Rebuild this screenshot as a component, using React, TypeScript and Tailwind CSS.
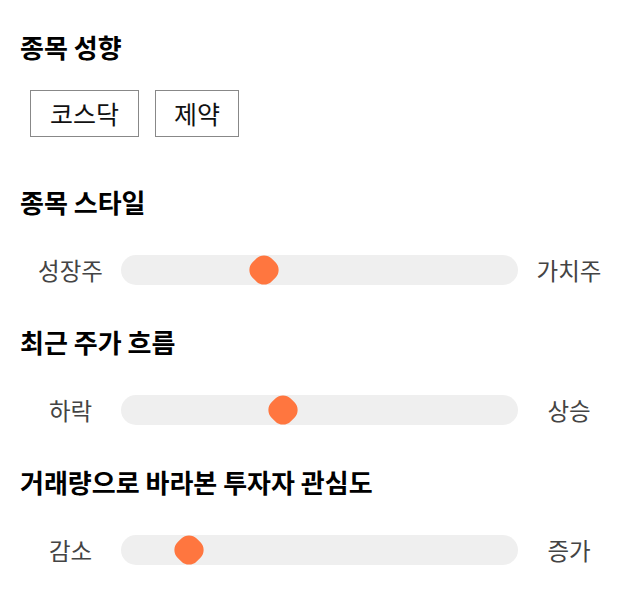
import React from 'react';

const font = { fontFamily: '"Noto Sans CJK KR", "Noto Sans", sans-serif' };

interface SliderRowProps {
  left: string;
  right: string;
  value: number; // thumb center, px from track start
}

const SliderRow: React.FC<SliderRowProps> = ({ left, right, value }) => (
  <div className="flex items-center h-[30px]">
    <span className="w-[101px] text-center text-[23.5px] leading-[30px] text-[#444]">{left}</span>
    <div className="relative w-[397px] h-[30px] rounded-full bg-[#efefef]">
      <div
        className="absolute top-1/2 w-[27px] h-[27px] -translate-x-1/2 -translate-y-1/2 rotate-45 rounded-[40%] bg-[#ff763f]"
        style={{ left: value }}
      />
    </div>
    <span className="w-[102px] text-center text-[23.5px] leading-[30px] text-[#444]">{right}</span>
  </div>
);

const Heading: React.FC<{ children: React.ReactNode }> = ({ children }) => (
  <h2 className="h-[30px] leading-[30px] text-[26px] font-bold text-black">{children}</h2>
);

export default function App() {
  return (
    <div className="w-[640px] h-[606px] bg-white px-5 pt-[32px]" style={font}>
      <Heading>종목 성향</Heading>
      <div className="flex gap-4 ml-[10px] mt-[28px]">
        <button className="w-[109px] h-[47px] border border-[#888] text-[25px] leading-[45px] text-[#111]">코스닥</button>
        <button className="w-[84px] h-[47px] border border-[#888] text-[25px] leading-[45px] text-[#111]">제약</button>
      </div>

      <div className="mt-[50px]">
        <Heading>종목 스타일</Heading>
      </div>
      <div className="mt-[38px]">
        <SliderRow left="성장주" right="가치주" value={143} />
      </div>

      <div className="mt-[42px]">
        <Heading>최근 주가 흐름</Heading>
      </div>
      <div className="mt-[38px]">
        <SliderRow left="하락" right="상승" value={162} />
      </div>

      <div className="mt-[42px]">
        <Heading>거래량으로 바라본 투자자 관심도</Heading>
      </div>
      <div className="mt-[38px]">
        <SliderRow left="감소" right="증가" value={68} />
      </div>
    </div>
  );
}
